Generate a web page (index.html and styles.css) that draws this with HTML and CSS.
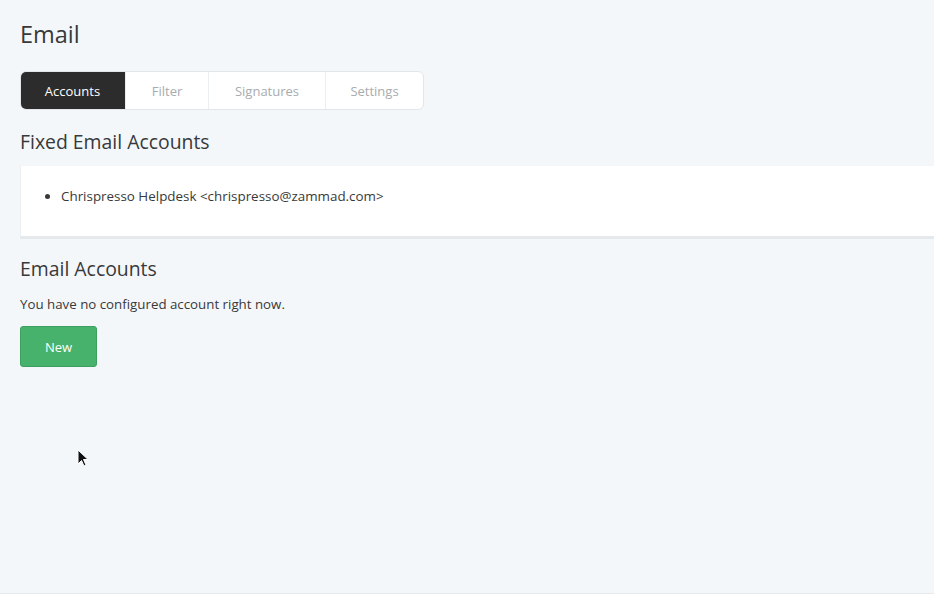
FILE: index.html
```html
<!DOCTYPE html>
<html>
<head>
<meta charset="utf-8">
<link rel="stylesheet" href="styles.css">
</head>
<body>
<div class="page">
  <h1 class="title">Email</h1>
  <div class="tabs">
    <div class="tab active">Accounts</div>
    <div class="tab tab-filter">Filter</div>
    <div class="tab tab-sig">Signatures</div>
    <div class="tab tab-set">Settings</div>
  </div>
  <h2 class="heading">Fixed Email Accounts</h2>
  <div class="box">
    <ul class="list">
      <li>Chrispresso Helpdesk &lt;chrispresso@zammad.com&gt;</li>
    </ul>
  </div>
  <h2 class="heading heading2">Email Accounts</h2>
  <p class="note">You have no configured account right now.</p>
  <button class="btn">New</button>
</div>
<svg class="cursor" width="12" height="18" viewBox="0 0 12 18"><path d="M1 1 L1 15 L4.5 11.5 L7 17 L9 16 L6.5 10.5 L11 10.5 Z" fill="#111" stroke="#fff" stroke-width="1"/></svg>
</body>
</html>
```
FILE: styles.css
```css
html, body {
  margin: 0;
  padding: 0;
  background: #f4f7fa;
  height: 100%;
  overflow: hidden;
}
body {
  font-family: "Open Sans", "Noto Sans", sans-serif;
  color: #38393a;
  position: relative;
  border-bottom: 1px solid #e6e9ec;
  box-sizing: border-box;
}
.page {
  padding: 20px 0 0 20px;
}
.title {
  margin: 0;
  font-size: 23.5px;
  font-weight: 400;
  line-height: 28px;
  color: #38393a;
}
.tabs {
  margin-top: 23px;
  display: flex;
  width: 404px;
  height: 39px;
  border: 1px solid #e3e6e8;
  border-radius: 6px;
  background: #fff;
  box-sizing: border-box;
  overflow: hidden;
}
.tab {
  display: flex;
  align-items: center;
  justify-content: center;
  font-size: 13px;
  color: #a8acaf;
  border-left: 1px solid #ebeef0;
  box-sizing: border-box;
}
.tab.active {
  background: #2c2c2c;
  color: #fff;
  width: 105px;
  border-left: none;
  margin: -1px 0 -1px -1px;
  border-radius: 6px 0 0 6px;
}
.tab-filter { width: 83px; }
.tab-sig { width: 117px; }
.tab-set { flex: 1; }
.heading {
  margin: 20px 0 0;
  font-size: 19.4px;
  font-weight: 400;
  line-height: 24px;
  color: #38393a;
}
.box {
  margin-top: 12px;
  height: 73px;
  background: #fff;
  border-left: 1px solid #eceef0;
  border-bottom: 3px solid #e6e9eb;
  box-sizing: border-box;
}
.list {
  margin: 0;
  padding: 21px 0 0 40px;
  font-size: 13.4px;
  line-height: 18px;
}
.heading2 {
  margin-top: 18px;
}
.note {
  margin: 14px 0 0;
  font-size: 13.3px;
  line-height: 18px;
}
.btn {
  margin-top: 13px;
  width: 77px;
  height: 41px;
  background: #47b26b;
  border: 1px solid #3ea060;
  border-radius: 3px;
  color: #fff;
  font-family: inherit;
  font-size: 13px;
  padding: 0;
}
.cursor {
  position: absolute;
  left: 77px;
  top: 449px;
}
```
